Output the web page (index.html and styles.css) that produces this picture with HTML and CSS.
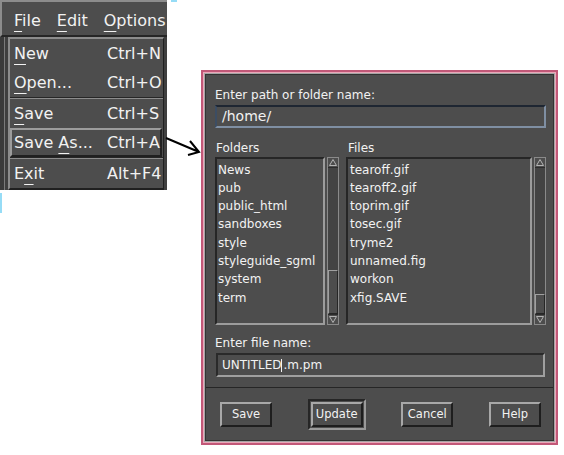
FILE: index.html
```html
<!DOCTYPE html>
<html>
<head>
<meta charset="utf-8">
<title>Save As</title>
<link rel="stylesheet" href="styles.css">
</head>
<body>
<div class="canvas">
  <div class="app">
    <div class="menubar">
      <span class="mb-item"><u>F</u>ile</span>
      <span class="mb-item"><u>E</u>dit</span>
      <span class="mb-item"><u>O</u>ptions</span>
    </div>
    <div class="app-body">
      <div class="dropdown">
        <div class="mi"><span><u>N</u>ew</span><span>Ctrl+N</span></div>
        <div class="mi"><span><u>O</u>pen...</span><span>Ctrl+O</span></div>
        <div class="msep"></div>
        <div class="mi"><span><u>S</u>ave</span><span>Ctrl+S</span></div>
        <div class="mi active"><span>Save <u>A</u>s...</span><span>Ctrl+A</span></div>
        <div class="msep"></div>
        <div class="mi"><span>E<u>x</u>it</span><span>Alt+F4</span></div>
      </div>
    </div>
  </div>
  <div class="mark mark-top"></div>
  <div class="mark mark-left"></div>

  <svg class="arrow" width="50" height="35" viewBox="0 0 50 35">
    <path d="M6 8 L39 22 M30 11 L39 22 L28 25" fill="none" stroke="#000" stroke-width="2"/>
  </svg>

  <div class="dialog">
    <div class="dlg-main">
      <div class="lbl">Enter path or folder name:</div>
      <div class="field path">/home/</div>
      <div class="lists">
        <div class="col col-folders">
          <div class="lbl col-lbl">Folders</div>
          <div class="listrow">
            <ul class="list">
              <li>News</li>
              <li>pub</li>
              <li>public_html</li>
              <li>sandboxes</li>
              <li>style</li>
              <li>styleguide_sgml</li>
              <li>system</li>
              <li>term</li>
            </ul>
            <div class="sb">
              <div class="sb-btn"><svg width="10" height="9" viewBox="0 0 10 9"><polygon points="5,1.5 8.5,7.5 1.5,7.5" fill="none" stroke="#b4b4b4" stroke-width="1"/></svg></div>
              <div class="sb-trough"><div class="thumb thumb-folders"></div></div>
              <div class="sb-btn"><svg width="10" height="9" viewBox="0 0 10 9"><polygon points="1.5,1.5 8.5,1.5 5,7.5" fill="none" stroke="#b4b4b4" stroke-width="1"/></svg></div>
            </div>
          </div>
        </div>
        <div class="col col-files">
          <div class="lbl col-lbl">Files</div>
          <div class="listrow">
            <ul class="list">
              <li>tearoff.gif</li>
              <li>tearoff2.gif</li>
              <li>toprim.gif</li>
              <li>tosec.gif</li>
              <li>tryme2</li>
              <li>unnamed.fig</li>
              <li>workon</li>
              <li>xfig.SAVE</li>
            </ul>
            <div class="sb">
              <div class="sb-btn"><svg width="10" height="9" viewBox="0 0 10 9"><polygon points="5,1.5 8.5,7.5 1.5,7.5" fill="none" stroke="#b4b4b4" stroke-width="1"/></svg></div>
              <div class="sb-trough"><div class="thumb thumb-files"></div></div>
              <div class="sb-btn"><svg width="10" height="9" viewBox="0 0 10 9"><polygon points="1.5,1.5 8.5,1.5 5,7.5" fill="none" stroke="#b4b4b4" stroke-width="1"/></svg></div>
            </div>
          </div>
        </div>
      </div>
      <div class="lbl lbl-file">Enter file name:</div>
      <div class="field fname">UNTITLED<span class="caret"></span>.m.pm</div>
    </div>
    <div class="dlg-sep"></div>
    <div class="dlg-actions">
      <button class="btn">Save</button>
      <span class="default-ring"><button class="btn">Update</button></span>
      <button class="btn">Cancel</button>
      <button class="btn">Help</button>
    </div>
  </div>
</div>
</body>
</html>
```

FILE: styles.css
```css
html, body {
  margin: 0;
  padding: 0;
  background: #ffffff;
}

.canvas {
  position: relative;
  width: 564px;
  height: 455px;
  overflow: hidden;
  font-family: "DejaVu Sans", "Liberation Sans", sans-serif;
  color: #f2f2f2;
}

u {
  text-decoration: underline;
  text-decoration-thickness: 1px;
  text-underline-offset: 5px;
}

/* ---------- application window with menu ---------- */
.app {
  position: absolute;
  left: 0;
  top: 0;
  width: 167px;
  height: 190px;
  background: #3f3f3f;
  display: flex;
  flex-direction: column;
}

.menubar {
  box-sizing: border-box;
  height: 37px;
  background: #4d4d4d;
  border-top: 2px solid #8c8c8c;
  border-left: 2px solid #8c8c8c;
  border-bottom: 2px solid #262626;
  padding: 4px 0 0 12px;
  display: flex;
  gap: 16px;
  font-size: 16px;
  line-height: 29px;
  white-space: nowrap;
  overflow: hidden;
}

.app-body {
  flex: 1;
  display: flex;
  padding-left: 8px;
  box-shadow: inset 4px 0 0 #3a3a3a, inset 5px 0 0 #7a7a7a;
}

.dropdown {
  width: 156px;
  box-sizing: border-box;
  background: #4d4d4d;
  border-top: 2px solid #8c8c8c;
  border-left: 2px solid #8c8c8c;
  border-right: 1px solid #202020;
  border-bottom: 2px solid #202020;
  font-size: 16px;
  display: flex;
  flex-direction: column;
}

.mi {
  display: grid;
  grid-template-columns: 93px 1fr;
  height: 29px;
  line-height: 29px;
  padding-left: 4px;
  box-sizing: border-box;
  white-space: nowrap;
}

.mi.active {
  border: 2px solid;
  border-color: #9c9c9c #202020 #202020 #9c9c9c;
  line-height: 25px;
  padding-left: 2px;
  margin-right: 1px;
}

.msep {
  height: 2px;
  box-sizing: border-box;
  border-top: 1px solid #262626;
  border-bottom: 1px solid #8c8c8c;
}

.mark {
  position: absolute;
  background: #96dcf6;
}
.mark-top { left: 171px; top: 0; width: 6px; height: 2px; }
.mark-left { left: 0; top: 193px; width: 2px; height: 20px; }

.arrow {
  position: absolute;
  left: 160px;
  top: 130px;
}

/* ---------- dialog ---------- */
.dialog {
  position: absolute;
  left: 201px;
  top: 70px;
  width: 357px;
  height: 375px;
  box-sizing: border-box;
  background: #4d4d4d;
  border: 2px solid #c25878;
  box-shadow:
    inset 0 0 0 1px #eaa6b8,
    inset 0 0 0 2px #a6a6a6,
    inset 0 0 0 3px #333333;
  display: flex;
  flex-direction: column;
  font-size: 12px;
}

.dlg-main {
  padding: 16px 10px 0 12px;
  display: flex;
  flex-direction: column;
}

.lbl {
  height: 14px;
  line-height: 14px;
  white-space: nowrap;
}

.field {
  box-sizing: border-box;
  border: 2px solid;
  border-color: #222222 #9a9a9a #9a9a9a #222222;
  background: #4d4d4d;
  white-space: nowrap;
}

.path {
  margin-top: 3px;
  height: 23px;
  font-size: 14px;
  line-height: 19px;
  padding-left: 5px;
  border-color: #1e2632 #7f8fa3 #7f8fa3 #3c4d63;
}

.lists {
  margin-top: 13px;
  display: flex;
  gap: 7px;
}

.col-folders { width: 124px; }
.col-files { flex: 1; }

.col-lbl { padding-left: 1px; }
.col-files .col-lbl { padding-left: 2px; }

.listrow {
  margin-top: 2px;
  height: 168px;
  display: flex;
  gap: 2px;
}

.list {
  flex: 1;
  margin: 0;
  list-style: none;
  box-sizing: border-box;
  border: 2px solid;
  border-color: #262626 #9c9c9c #9c9c9c #262626;
  padding: 1.5px 0 0 2px;
  line-height: 18.3px;
  overflow: hidden;
  white-space: nowrap;
}

.col-folders .list { padding-left: 1px; }

.sb {
  width: 12px;
  box-sizing: border-box;
  border: 1px solid #8a8a8a;
  background: #434343;
  display: flex;
  flex-direction: column;
}

.sb-btn {
  height: 9px;
  display: flex;
  justify-content: center;
  align-items: center;
  background: #4d4d4d;
}
.sb-btn svg { display: block; }

.sb-trough {
  flex: 1;
  display: flex;
  flex-direction: column;
  justify-content: flex-end;
  border-top: 1px solid #2c2c2c;
  border-bottom: 1px solid #2c2c2c;
}

.thumb {
  box-sizing: border-box;
  border: 1px solid;
  border-color: #a0a0a0 #262626 #262626 #a0a0a0;
  background: #4d4d4d;
}
.thumb-folders { height: 44px; }
.thumb-files { height: 20px; }

.lbl-file { margin-top: 11px; }

.fname {
  margin: 3px 1px 0 1px;
  height: 24px;
  line-height: 20px;
  padding-left: 4px;
  border-color: #2a2a2a #a0a0a0 #a0a0a0 #2a2a2a;
}

.caret {
  display: inline-block;
  width: 1px;
  height: 13px;
  background: #f2f2f2;
  vertical-align: -3px;
  margin: 0 1px 0 0;
}

.dlg-sep {
  margin: 10px 3px 0 3px;
  height: 1px;
  background: #262626;
}

.dlg-actions {
  flex: 1;
  display: flex;
  justify-content: space-between;
  align-items: center;
  padding: 0 15px 3px 17px;
}

.btn {
  width: 52px;
  height: 25px;
  box-sizing: border-box;
  padding: 0;
  margin: 0;
  border: 2px solid;
  border-color: #a8a8a8 #1e1e1e #1e1e1e #a8a8a8;
  background: #4d4d4d;
  color: #f2f2f2;
  font-family: "DejaVu Sans", "Liberation Sans", sans-serif;
  font-size: 11.5px;
  line-height: 21px;
  display: block;
}

.default-ring {
  display: block;
  padding: 1px;
  border: 2px solid;
  border-color: #262626 #9a9a9a #9a9a9a #262626;
}
```
